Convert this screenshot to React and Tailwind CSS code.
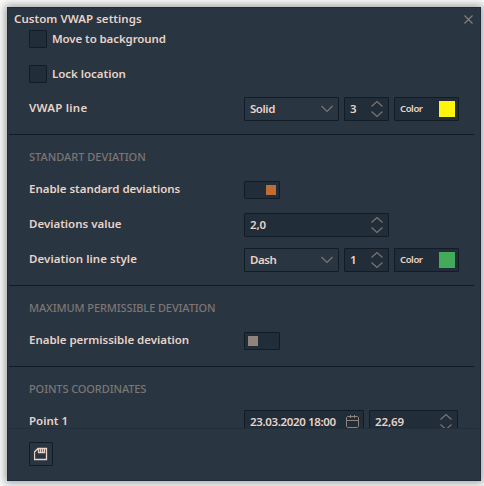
const field = "flex h-6 shrink-0 items-center rounded-[1px] border border-[#121c26]";

function Chevrons() {
  return (
    <svg className="shrink-0" width="12" height="18" viewBox="0 0 12 18" fill="none" stroke="#7b7573" strokeWidth="1.2">
      <path d="M.5 6.5 6 1.5l5.5 5M.5 11.5 6 16.5l5.5-5" />
    </svg>
  );
}

function Select({ value }) {
  return (
    <div className={`${field} w-[95px] justify-between pl-[5px] pr-[5px]`}>
      <span className="text-[11.5px] leading-3 tracking-[-0.45px]">{value}</span>
      <svg width="12" height="8" viewBox="0 0 12 8" fill="none" stroke="#7b7573" strokeWidth="1.2">
        <path d="M.5 1 6 6.5 11.5 1" />
      </svg>
    </div>
  );
}

function Spinner({ value, width }) {
  return (
    <div className={`${field} ${width} justify-between bg-[#212e3a] pl-[5px] pr-[5px]`}>
      <span className="text-[11.5px] leading-3 tracking-[-0.1px]">{value}</span>
      <Chevrons />
    </div>
  );
}

function ColorField({ swatch }) {
  return (
    <div className={`${field} w-[65px] justify-between bg-[#212e3a] pl-[5px] pr-[3px]`}>
      <span className="text-[9.5px] tracking-[-0.4px]">Color</span>
      <span className={`h-4 w-4 ${swatch}`} />
    </div>
  );
}

function Toggle({ on }) {
  return (
    <div className={`flex h-[18px] w-9 items-center rounded-[1px] border border-[#121c26] bg-[#212e3a] px-[3px] ${on ? "justify-end" : ""}`}>
      <span className={`h-[10px] w-[10px] ${on ? "bg-[#c06d35]" : "bg-[#8f837c]"}`} />
    </div>
  );
}

function CheckRow({ label, tracking }) {
  return (
    <div className="flex h-[18px] items-center gap-[5px] pl-[21px]">
      <span className="h-[18px] w-[18px] rounded-[1px] border border-[#121c26] bg-[#212e3a]" />
      <span className={`text-[11.5px] ${tracking}`}>{label}</span>
    </div>
  );
}

function Row({ label, tracking, children }) {
  return (
    <div className="flex h-6 shrink-0 items-center pl-[21px]">
      <span className={`w-[215px] shrink-0 pb-[2px] text-[11.5px] leading-3 ${tracking}`}>{label}</span>
      <div className="flex gap-[5px]">{children}</div>
    </div>
  );
}

function Section({ title, tracking, children }) {
  return (
    <section className="ml-px mr-[6px] border-t border-[#121b25] pt-[13px]">
      <h2 className={`mb-3 h-[18px] pl-5 text-[11px] leading-[18px] font-medium text-[#7d7672] ${tracking}`}>{title}</h2>
      <div className="-ml-px flex flex-col gap-[11px]">{children}</div>
    </section>
  );
}

export default function App() {
  return (
    <div className="h-[486px] w-[484px] overflow-hidden bg-[#fafafa] pl-[7px] pt-[7px] font-['Noto_Sans','Open_Sans',sans-serif] font-semibold whitespace-nowrap text-[#e7d3c7]">
      <div className="flex h-[474px] w-[474px] flex-col border border-[#1f2c39] bg-[#2a3542] shadow-[0_0_8px_2px_rgba(0,0,0,0.36)]">
        <header className="flex h-[22px] shrink-0 items-center justify-between pl-[6px] pr-[7px]">
          <h1 className="text-[11.5px] tracking-[0.04px]">Custom VWAP settings</h1>
          <svg width="9" height="9" viewBox="0 0 9 9" stroke="#87807b" strokeWidth="1.1">
            <path d="m.5.5 8 8m0-8-8 8" />
          </svg>
        </header>
        <main className="flex h-[398px] shrink-0 flex-col overflow-hidden">
          <div className="flex h-[104px] shrink-0 flex-col">
            <CheckRow label="Move to background" tracking="tracking-[-0.1px]" />
            <div className="mt-[17px]">
              <CheckRow label="Lock location" tracking="tracking-[-0.02px]" />
            </div>
            <div className="mt-[14px]">
              <Row label="VWAP line" tracking="tracking-[0.25px]">
                <Select value="Solid" />
                <Spinner value="3" width="w-[45px]" />
                <ColorField swatch="bg-[#fff40b]" />
              </Row>
            </div>
          </div>
          <div className="h-[151px] shrink-0">
            <Section title="STANDART DEVIATION" tracking="tracking-[0px]">
              <Row label="Enable standard deviations" tracking="tracking-[-0.03px]">
                <Toggle on />
              </Row>
              <Row label="Deviations value" tracking="tracking-[0px]">
                <Spinner value="2,0" width="w-[145px]" />
              </Row>
              <Row label="Deviation line style" tracking="tracking-[0.06px]">
                <Select value="Dash" />
                <Spinner value="1" width="w-[45px]" />
                <ColorField swatch="bg-[#42aa58]" />
              </Row>
            </Section>
          </div>
          <div className="h-[81px] shrink-0">
            <Section title="MAXIMUM PERMISSIBLE DEVIATION" tracking="tracking-[-0.1px]">
              <Row label="Enable permissible deviation" tracking="tracking-[-0.03px]">
                <Toggle />
              </Row>
            </Section>
          </div>
          <Section title="POINTS COORDINATES" tracking="tracking-[-0.1px]">
            <Row label="Point 1" tracking="tracking-[0px]">
              <div className={`${field} w-[120px] justify-between bg-[#212e3a] pl-[5px] pr-[4px]`}>
                <span className="text-[11.5px] leading-3 tracking-[-0.36px]">23.03.2020 18:00</span>
                <svg width="13" height="14" viewBox="0 0 13 14" fill="none" stroke="#8f837c">
                  <path d="M1.5 1.5h10l1 1v9l-1 1h-10l-1-1v-9l1-1ZM.5 5.5h12M4.5 0v3M8.5 0v3" />
                </svg>
              </div>
              <Spinner value="22,69" width="w-[89px]" />
            </Row>
          </Section>
        </main>
        <footer className="mx-px border-t border-[#222f3b] pl-5 pt-[13px]">
          <button className="flex h-6 w-6 items-center justify-center rounded-[1px] border border-[#121c26]">
            <svg width="14" height="14" viewBox="0 0 14 14" fill="none" stroke="#e7d3c7" strokeWidth="1.3">
              <path d="M4 1.5h8.5v11h-12V5L4 1.5ZM4.5 2v3.5h6V2M6.5 2v3M8.5 2v3" />
            </svg>
          </button>
        </footer>
      </div>
    </div>
  );
}
